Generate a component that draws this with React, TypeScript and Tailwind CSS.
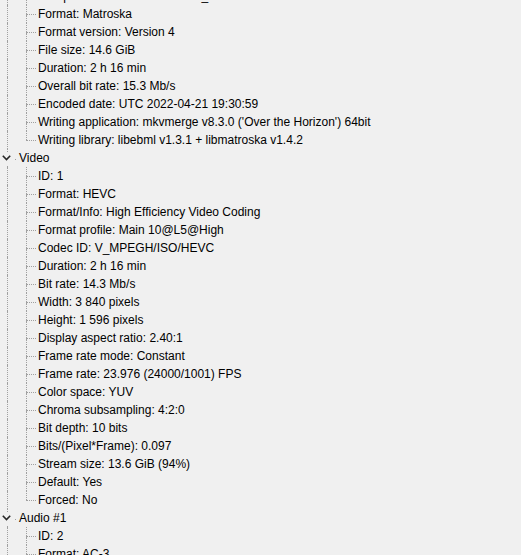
import React from "react";

type Group = { title: string | null; items: string[]; lastComplete: boolean };

const groups: Group[] = [
  {
    title: null,
    items: [
      "Complete name: D:\\Films\\Halo_S01E01.mkv",
      "Format: Matroska",
      "Format version: Version 4",
      "File size: 14.6 GiB",
      "Duration: 2 h 16 min",
      "Overall bit rate: 15.3 Mb/s",
      "Encoded date: UTC 2022-04-21 19:30:59",
      "Writing application: mkvmerge v8.3.0 ('Over the Horizon') 64bit",
      "Writing library: libebml v1.3.1 + libmatroska v1.4.2",
    ],
    lastComplete: true,
  },
  {
    title: "Video",
    items: [
      "ID: 1",
      "Format: HEVC",
      "Format/Info: High Efficiency Video Coding",
      "Format profile: Main 10@L5@High",
      "Codec ID: V_MPEGH/ISO/HEVC",
      "Duration: 2 h 16 min",
      "Bit rate: 14.3 Mb/s",
      "Width: 3 840 pixels",
      "Height: 1 596 pixels",
      "Display aspect ratio: 2.40:1",
      "Frame rate mode: Constant",
      "Frame rate: 23.976 (24000/1001) FPS",
      "Color space: YUV",
      "Chroma subsampling: 4:2:0",
      "Bit depth: 10 bits",
      "Bits/(Pixel*Frame): 0.097",
      "Stream size: 13.6 GiB (94%)",
      "Default: Yes",
      "Forced: No",
    ],
    lastComplete: true,
  },
  {
    title: "Audio #1",
    items: ["ID: 2", "Format: AC-3", "Format/Info: Audio Coding 3"],
    lastComplete: false,
  },
];

function ChildRow({ text, last }: { text: string; last: boolean }) {
  return (
    <div className="flex h-[18px]">
      <div className="w-[7px] shrink-0" />
      <div className="w-[19px] shrink-0 border-l border-dotted border-[#a0a0a0]" />
      <div className="w-[12px] shrink-0 flex flex-col">
        <div className="h-[9px] border-l border-dotted border-[#a0a0a0]" />
        <div className="w-[10px] h-0 border-t border-dotted border-[#a0a0a0]" />
        <div
          className={
            last
              ? "flex-1"
              : "flex-1 border-l border-dotted border-[#a0a0a0]"
          }
        />
      </div>
      <div className="leading-[18px] whitespace-nowrap">{text}</div>
    </div>
  );
}

function HeaderRow({ title }: { title: string }) {
  return (
    <div className="flex h-[18px]">
      <div className="w-[15px] shrink-0 flex flex-col">
        <div className="ml-[7px] h-[3px] border-l border-dotted border-[#a0a0a0]" />
        <div className="h-[14px] flex items-start pl-[2px] pt-[3px]">
          <svg width="9" height="6" viewBox="0 0 9 6">
            <polyline
              points="0.8,0.8 4.5,4.5 8.2,0.8"
              fill="none"
              stroke="#262626"
              strokeWidth="1.6"
            />
          </svg>
        </div>
        <div className="ml-[7px] flex-1 border-l border-dotted border-[#a0a0a0]" />
      </div>
      <div className="w-[4px] shrink-0 flex flex-col">
        <div className="h-[10px]" />
        <div className="w-[1px] h-[1px] bg-[#a0a0a0]" />
      </div>
      <div className="leading-[18px] whitespace-nowrap">{title}</div>
    </div>
  );
}

export default function App() {
  return (
    <div
      className="w-[521px] h-[555px] overflow-hidden bg-[#f0f0f0] text-black text-[12px]"
      style={{ fontFamily: '"Liberation Sans", Arial, sans-serif' }}
    >
      <div className="mt-[-13px] flex flex-col">
        {groups.map((g, gi) => (
          <React.Fragment key={gi}>
            {g.title && <HeaderRow title={g.title} />}
            {g.items.map((t, i) => (
              <ChildRow
                key={i}
                text={t}
                last={g.lastComplete && i === g.items.length - 1}
              />
            ))}
          </React.Fragment>
        ))}
      </div>
    </div>
  );
}
